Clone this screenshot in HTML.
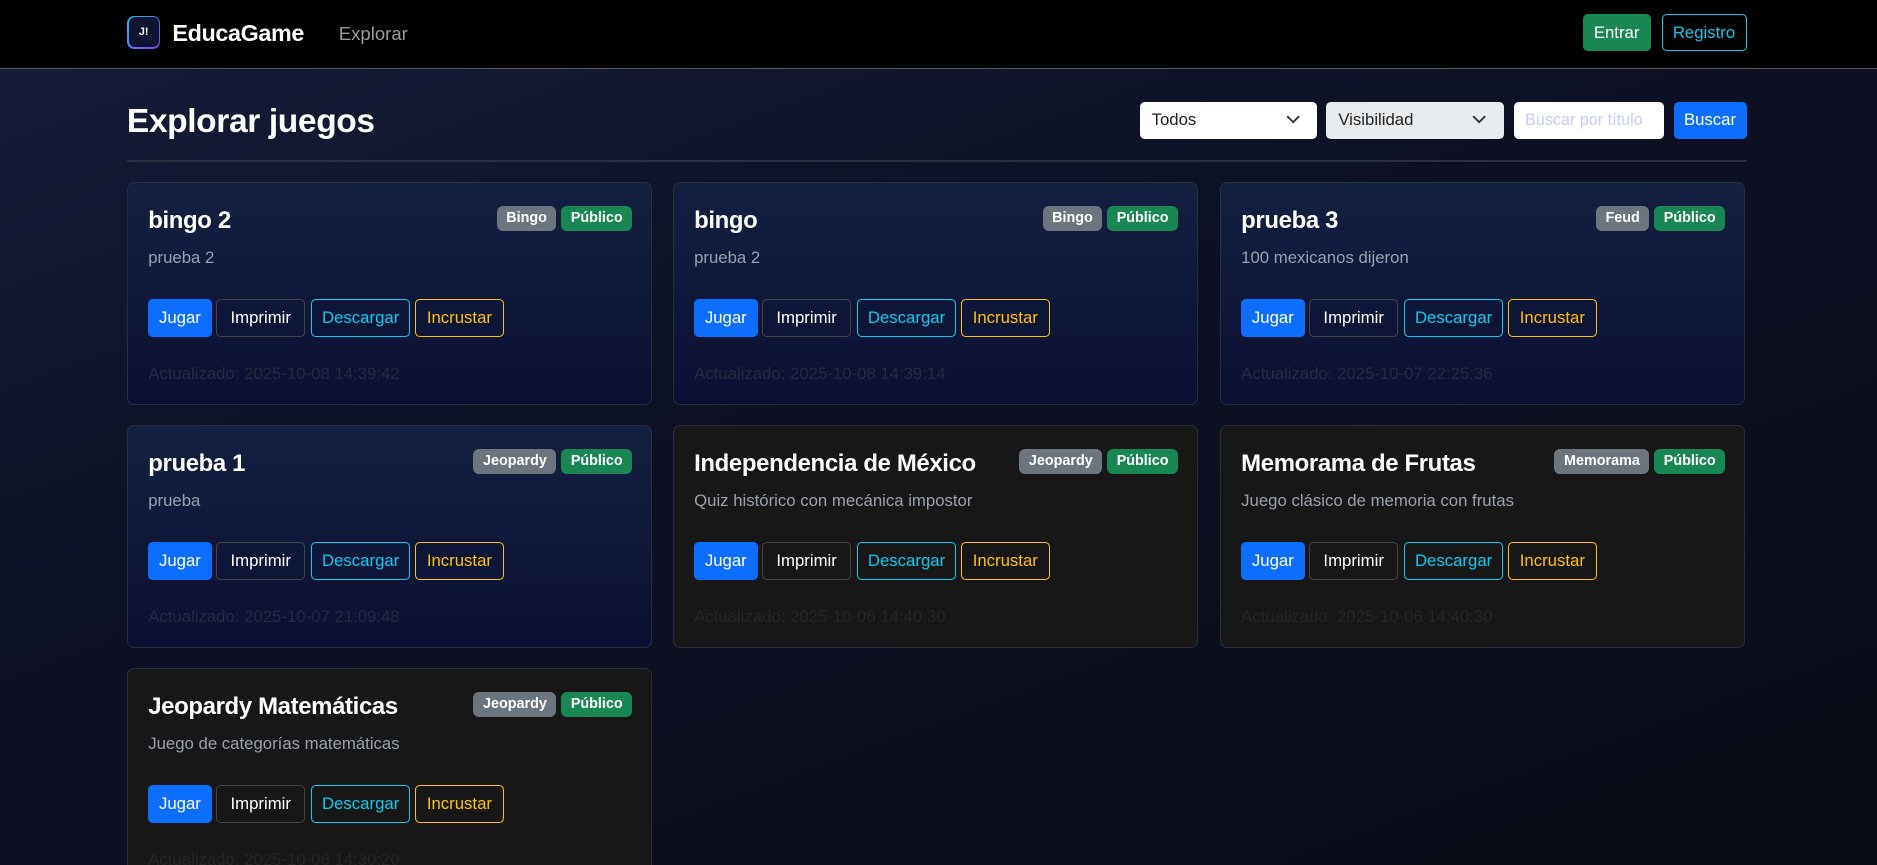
<!DOCTYPE html>
<html style="background:#090c16;overflow:hidden"><head><meta charset="utf-8"><style>
html,body{margin:0;padding:0}
body{width:1568px;height:723px;overflow:hidden;zoom:1.19707;font-family:"Liberation Sans",sans-serif;background:linear-gradient(160deg,#171d3a 0%,#0d1124 40%,#090c16 100%);color:#fff;position:relative}
.nav{position:absolute;left:0;top:0;width:1568px;height:57px;background:#000;border-bottom:1px solid #5a5a5a}
.logo{position:absolute;left:106px;top:13px;width:28px;height:28px;border-radius:6px;background:linear-gradient(135deg,#22c3f0,#8a3cf0);padding:1.5px;box-sizing:border-box}
.logo div{width:100%;height:100%;border-radius:5px;background:#0f1530;color:#fff;font-size:9px;font-weight:bold;display:flex;align-items:center;justify-content:center}
.brand{position:absolute;left:144px;top:17px;font-size:19.5px;font-weight:bold;letter-spacing:-0.3px}
.navl{position:absolute;left:283px;top:19px;font-size:15.5px;color:#9a9a9a}
.btn{position:absolute;box-sizing:border-box;border-radius:4px;font-size:14px;display:flex;align-items:center;justify-content:center}
h1{position:absolute;left:106px;top:86px;margin:0;font-size:28px;font-weight:bold;letter-spacing:-0.3px}
.sel{position:absolute;top:85px;height:31px;border-radius:4px;box-sizing:border-box;font-size:14px;color:#222;padding-left:10px;display:flex;align-items:center}
.sel svg{position:absolute;right:14px;top:11px}
.hr{position:absolute;left:106px;top:134px;width:1353px;height:1px;background:#2a2f40}
.card{position:absolute;width:439px;height:186px;box-sizing:border-box;border:1px solid #2a2e3a;border-radius:6px}
.blue{background:linear-gradient(180deg,#142040,#0b1032)}
.gray{background:#171717}
.t{position:absolute;left:17px;top:20px;font-size:20px;font-weight:bold;letter-spacing:-0.3px}
.badges{position:absolute;right:16px;top:19px;display:flex;gap:4px}
.b{height:21px;padding:0 8px;border-radius:5px;font-size:12px;font-weight:bold;display:flex;align-items:center}
.d{position:absolute;left:17px;top:54px;font-size:14px;color:#9aa0ac}
.row{position:absolute;left:17px;top:97px;display:flex;gap:4px}
.row span{height:32px;box-sizing:border-box;border-radius:4px;font-size:14px;display:flex;align-items:center;justify-content:center;border:1px solid}
.row span:nth-child(1){width:53px}.row span:nth-child(2){width:74px}.row span:nth-child(3){width:83px;margin-left:1px}.row span:nth-child(4){width:74px}
.u{position:absolute;left:17px;top:151px;font-size:14px;color:#262b3c}
.gray .u{color:#262626}
</style></head><body>
<div class="nav">
<div class="logo"><div>J!</div></div>
<div class="brand">EducaGame</div>
<div class="navl">Explorar</div>
<div class="btn" style="left:1322px;top:12px;width:57px;height:31px;background:#198754">Entrar</div>
<div class="btn" style="left:1388px;top:12px;width:71px;height:31px;border:1px solid #0dcaf0;color:#0dcaf0">Registro</div>
</div>
<h1>Explorar juegos</h1>
<div class="sel" style="left:952px;width:148px;background:#fff">Todos<svg width="12" height="8" viewBox="0 0 12 8"><path d="M1 1l5 5 5-5" stroke="#333" stroke-width="1.6" fill="none"/></svg></div>
<div class="sel" style="left:1108px;width:148px;background:#e9ecef">Visibilidad<svg width="12" height="8" viewBox="0 0 12 8"><path d="M1 1l5 5 5-5" stroke="#333" stroke-width="1.6" fill="none"/></svg></div>
<div class="sel" style="left:1265px;width:125px;background:#fff;color:#c5cbff;padding-left:9px;font-size:13.5px">Buscar por título</div>
<div class="btn" style="left:1398px;top:85px;width:61px;height:31px;background:#0d6efd">Buscar</div>
<div class="hr"></div>

<div class="card blue" style="left:106px;top:152px"><div class="t">bingo 2</div><div class="badges"><div class="b" style="background:#6c757d">Bingo</div><div class="b" style="background:#198754">Público</div></div><div class="d">prueba 2</div><div class="row"><span style="background:#0d6efd;border-color:#0d6efd">Jugar</span><span style="border-color:#444">Imprimir</span><span style="border-color:#0dcaf0;color:#0dcaf0">Descargar</span><span style="border-color:#ffc107;color:#ffc107">Incrustar</span></div><div class="u">Actualizado: 2025-10-08 14:39:42</div></div>

<div class="card blue" style="left:562px;top:152px"><div class="t">bingo</div><div class="badges"><div class="b" style="background:#6c757d">Bingo</div><div class="b" style="background:#198754">Público</div></div><div class="d">prueba 2</div><div class="row"><span style="background:#0d6efd;border-color:#0d6efd">Jugar</span><span style="border-color:#444">Imprimir</span><span style="border-color:#0dcaf0;color:#0dcaf0">Descargar</span><span style="border-color:#ffc107;color:#ffc107">Incrustar</span></div><div class="u">Actualizado: 2025-10-08 14:39:14</div></div>

<div class="card blue" style="left:1019px;top:152px"><div class="t">prueba 3</div><div class="badges"><div class="b" style="background:#6c757d">Feud</div><div class="b" style="background:#198754">Público</div></div><div class="d">100 mexicanos dijeron</div><div class="row"><span style="background:#0d6efd;border-color:#0d6efd">Jugar</span><span style="border-color:#444">Imprimir</span><span style="border-color:#0dcaf0;color:#0dcaf0">Descargar</span><span style="border-color:#ffc107;color:#ffc107">Incrustar</span></div><div class="u">Actualizado: 2025-10-07 22:25:36</div></div>

<div class="card blue" style="left:106px;top:355px"><div class="t">prueba 1</div><div class="badges"><div class="b" style="background:#6c757d">Jeopardy</div><div class="b" style="background:#198754">Público</div></div><div class="d">prueba</div><div class="row"><span style="background:#0d6efd;border-color:#0d6efd">Jugar</span><span style="border-color:#444">Imprimir</span><span style="border-color:#0dcaf0;color:#0dcaf0">Descargar</span><span style="border-color:#ffc107;color:#ffc107">Incrustar</span></div><div class="u">Actualizado: 2025-10-07 21:09:48</div></div>

<div class="card gray" style="left:562px;top:355px"><div class="t">Independencia de México</div><div class="badges"><div class="b" style="background:#6c757d">Jeopardy</div><div class="b" style="background:#198754">Público</div></div><div class="d">Quiz histórico con mecánica impostor</div><div class="row"><span style="background:#0d6efd;border-color:#0d6efd">Jugar</span><span style="border-color:#444">Imprimir</span><span style="border-color:#0dcaf0;color:#0dcaf0">Descargar</span><span style="border-color:#ffc107;color:#ffc107">Incrustar</span></div><div class="u">Actualizado: 2025-10-06 14:40:30</div></div>

<div class="card gray" style="left:1019px;top:355px"><div class="t">Memorama de Frutas</div><div class="badges"><div class="b" style="background:#6c757d">Memorama</div><div class="b" style="background:#198754">Público</div></div><div class="d">Juego clásico de memoria con frutas</div><div class="row"><span style="background:#0d6efd;border-color:#0d6efd">Jugar</span><span style="border-color:#444">Imprimir</span><span style="border-color:#0dcaf0;color:#0dcaf0">Descargar</span><span style="border-color:#ffc107;color:#ffc107">Incrustar</span></div><div class="u">Actualizado: 2025-10-06 14:40:30</div></div>

<div class="card gray" style="left:106px;top:558px"><div class="t">Jeopardy Matemáticas</div><div class="badges"><div class="b" style="background:#6c757d">Jeopardy</div><div class="b" style="background:#198754">Público</div></div><div class="d">Juego de categorías matemáticas</div><div class="row"><span style="background:#0d6efd;border-color:#0d6efd">Jugar</span><span style="border-color:#444">Imprimir</span><span style="border-color:#0dcaf0;color:#0dcaf0">Descargar</span><span style="border-color:#ffc107;color:#ffc107">Incrustar</span></div><div class="u">Actualizado: 2025-10-06 14:30:20</div></div>
</body></html>
